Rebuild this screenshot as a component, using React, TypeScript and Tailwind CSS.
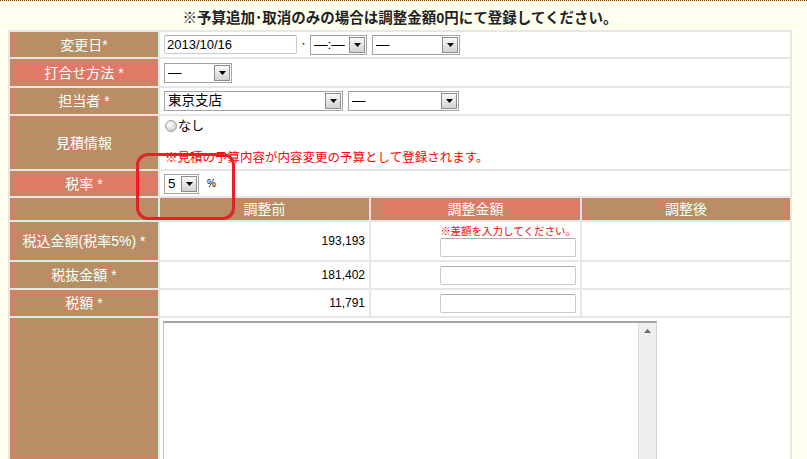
import React from "react";

const FONT = "font-['Liberation_Sans','Noto_Sans_CJK_JP',sans-serif]";
const TEX =
  "bg-[image:repeating-conic-gradient(#da796b_0%_25%,#bd8f5f_0%_50%)] bg-[length:2px_2px]";

function Tri({ className = "" }: { className?: string }) {
  return (
    <svg width="7" height="4" viewBox="0 0 7 4" className={className}>
      <path d="M0 0h7L3.5 4z" fill="#000" />
    </svg>
  );
}

function Sel({ w, text }: { w: string; text: string }) {
  return (
    <div className={`flex h-[20px] items-stretch border border-[#a3a3a3] bg-white ${w}`}>
      <div className="flex-1 overflow-hidden whitespace-nowrap pl-[3px] text-[13.5px] leading-[18px] text-black">
        {text}
      </div>
      <div className="m-[1px] flex w-[16px] items-center justify-center border border-[#8c8c8c] bg-[image:linear-gradient(#fafafa,#d2d2d2)]">
        <Tri />
      </div>
    </div>
  );
}

function Inp({ w, text = "" }: { w: string; text?: string }) {
  return (
    <div
      className={`h-[19px] rounded-[2px] border border-[#c6c9d0] border-t-[#a9acb4] bg-white pl-[2px] text-[13px] leading-[17px] text-black ${w}`}
    >
      {text}
    </div>
  );
}

function Label({ children, className = "" }: { children?: React.ReactNode; className?: string }) {
  return (
    <div
      className={`${TEX} flex items-center justify-center text-[14px] leading-[16px] text-white ${className}`}
    >
      {children}
    </div>
  );
}

export default function App() {
  return (
    <div
      className={`relative h-[459px] w-[807px] overflow-hidden border-t border-dotted border-[#6e3a00] bg-[#fffff0] ${FONT}`}
    >
      <div className="ml-[8px] h-[29px] w-[784px] pt-[9px] text-center text-[14.5px] font-bold leading-[16px] text-[#222]">
        ※予算追加･取消のみの場合は調整金額0円にて登録してください。
      </div>

      <div className="ml-[8px] grid w-[784px] grid-cols-[148px_209px_209px_208px] grid-rows-[25px_27px_26px_53px_25px_22px_38px_26px_26px_200px] gap-[2px] bg-[#e6e6e6] p-[2px]">
        {/* row 1 */}
        <Label>変更日*</Label>
        <div className="col-span-3 flex items-center bg-white pl-[4px]">
          <Inp w="w-[133px]" text="2013/10/16" />
          <span className="mx-[4px] text-[10px] text-black">･</span>
          <Sel w="w-[57px]" text="—:—" />
          <div className="w-[5px]" />
          <Sel w="w-[88px]" text="—" />
        </div>

        {/* row 2 */}
        <Label>打合せ方法 *</Label>
        <div className="col-span-3 flex items-center bg-white pl-[4px]">
          <Sel w="w-[68px]" text="—" />
        </div>

        {/* row 3 */}
        <Label>担当者 *</Label>
        <div className="col-span-3 flex items-center bg-white pl-[4px]">
          <Sel w="w-[179px]" text="東京支店" />
          <div className="w-[5px]" />
          <Sel w="w-[111px]" text="—" />
        </div>

        {/* row 4 */}
        <Label>見積情報</Label>
        <div className="col-span-3 flex flex-col bg-white pl-[5px]">
          <div className="flex h-[20px] items-center text-[13px] text-black">
            <span className="mr-[1px] inline-block h-[12px] w-[12px] rounded-full border border-[#a0a0a0] bg-[image:radial-gradient(circle_at_40%_35%,#ffffff,#bdbdbd)]" />
            なし
          </div>
          <div className="mt-auto flex h-[22px] items-center text-[12.5px] text-[#ff0000]">
            ※見積の予算内容が内容変更の予算として登録されます。
          </div>
        </div>

        {/* row 5 */}
        <Label>税率 *</Label>
        <div className="col-span-3 flex items-center bg-white pl-[4px]">
          <Sel w="w-[35px]" text="5" />
          <span className="ml-[8px] text-[10px] text-black">%</span>
        </div>

        {/* header */}
        <Label />
        <Label>調整前</Label>
        <Label>調整金額</Label>
        <Label>調整後</Label>

        {/* 税込 */}
        <Label>税込金額(税率5%) *</Label>
        <div className="flex items-center justify-end bg-white pr-[4px] text-[12px] text-black">193,193</div>
        <div className="flex flex-col items-end bg-white pr-[4px] pt-[2px]">
          <div className="h-[14px] text-[10.5px] leading-[14px] text-[#ff0000]">※差額を入力してください。</div>
          <Inp w="w-[136px]" />
        </div>
        <div className="bg-white" />

        {/* 税抜 */}
        <Label>税抜金額 *</Label>
        <div className="flex items-center justify-end bg-white pr-[4px] text-[12px] text-black">181,402</div>
        <div className="flex items-center justify-end bg-white pr-[4px]">
          <Inp w="w-[136px]" />
        </div>
        <div className="bg-white" />

        {/* 税額 */}
        <Label>税額 *</Label>
        <div className="flex items-center justify-end bg-white pr-[4px] text-[12px] text-black">11,791</div>
        <div className="flex items-center justify-end bg-white pr-[4px]">
          <Inp w="w-[136px]" />
        </div>
        <div className="bg-white" />

        {/* textarea row */}
        <Label />
        <div className="col-span-3 bg-white pl-[3px] pt-[3px]">
          <div className="flex h-[200px] w-[494px] border border-[#d4d4dc] border-l-[#c0c0c8] border-t-2 border-t-[#a4a4a4] bg-white">
            <div className="flex-1" />
            <div className="flex w-[18px] justify-center border-l border-[#dcdcdc] bg-[#eeeeee] pt-[6px]">
              <svg width="7" height="4" viewBox="0 0 7 4">
                <path d="M3.5 0L7 4H0z" fill="#6a6a6a" />
              </svg>
            </div>
          </div>
        </div>
      </div>

      <div className="absolute left-[136px] top-[152px] h-[67px] w-[99px] rounded-[12px] border-[3px] border-[#ee1c25]" />
    </div>
  );
}
